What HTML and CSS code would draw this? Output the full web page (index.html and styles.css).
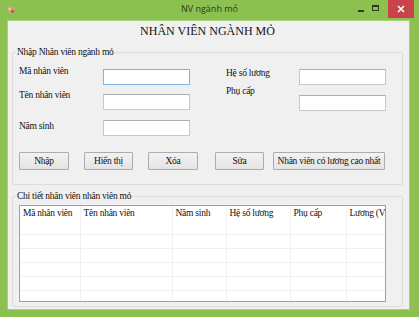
FILE: index.html
```html
<!DOCTYPE html>
<html lang="vi">
<head>
    <meta charset="UTF-8">
    <title>NV ngành mỏ</title>
    <link rel="stylesheet" href="styles.css">
</head>
<body>
    <div class="window">
        <div class="titlebar">
            <svg class="app-icon" width="10" height="10" viewBox="0 0 10 10">
                <circle cx="5" cy="5" r="4" fill="#c9a66b"/>
                <circle cx="3.5" cy="4" r="1.6" fill="#e1c98f"/>
                <circle cx="6.5" cy="6.5" r="1.4" fill="#8a6a3c"/>
            </svg>
            <div class="caption">NV ngành mỏ</div>
            <div class="controls">
                <span class="btn-min"></span>
                <span class="btn-max"></span>
                <span class="btn-close">
                    <svg width="8" height="8" viewBox="0 0 8 8"><path d="M1 1L7 7M7 1L1 7" stroke="#fff" stroke-width="1.6"/></svg>
                </span>
            </div>
        </div>
        <div class="client">
            <h1 class="heading">NHÂN VIÊN NGÀNH MỎ</h1>

            <fieldset class="group group-input">
                <legend>Nhập Nhân viên ngành mỏ</legend>
                <div class="form">
                    <div class="col col-left">
                        <div class="field f1">
                            <label>Mã nhân viên</label>
                            <input type="text" class="box focused">
                        </div>
                        <div class="field f2">
                            <label>Tên nhân viên</label>
                            <input type="text" class="box">
                        </div>
                        <div class="field f3">
                            <label>Năm sinh</label>
                            <input type="text" class="box">
                        </div>
                    </div>
                    <div class="col col-right">
                        <div class="field r1">
                            <label>Hệ số lương</label>
                            <input type="text" class="box">
                        </div>
                        <div class="field r2">
                            <label>Phụ cấp</label>
                            <input type="text" class="box">
                        </div>
                    </div>
                </div>
                <div class="buttons">
                    <button class="b-nhap">Nhập</button>
                    <button class="b-hien">Hiển thị</button>
                    <button class="b-xoa">Xóa</button>
                    <button class="b-sua">Sửa</button>
                    <button class="b-max">Nhân viên có lương cao nhất</button>
                </div>
            </fieldset>

            <fieldset class="group group-list">
                <legend>Chi tiết nhân viên nhân viên mỏ</legend>
                <div class="listview">
                    <table>
                        <colgroup>
                            <col style="width:60px">
                            <col style="width:92px">
                            <col style="width:54px">
                            <col style="width:64px">
                            <col style="width:56px">
                            <col style="width:80px">
                        </colgroup>
                        <thead>
                            <tr>
                                <th>Mã nhân viên</th>
                                <th>Tên nhân viên</th>
                                <th>Năm sinh</th>
                                <th>Hệ số lương</th>
                                <th>Phụ cấp</th>
                                <th>Lương (VNĐ)</th>
                            </tr>
                        </thead>
                        <tbody>
                            <tr><td></td><td></td><td></td><td></td><td></td><td></td></tr>
                            <tr><td></td><td></td><td></td><td></td><td></td><td></td></tr>
                            <tr><td></td><td></td><td></td><td></td><td></td><td></td></tr>
                            <tr><td></td><td></td><td></td><td></td><td></td><td></td></tr>
                            <tr><td></td><td></td><td></td><td></td><td></td><td></td></tr>
                            <tr><td></td><td></td><td></td><td></td><td></td><td></td></tr>
                        </tbody>
                    </table>
                </div>
            </fieldset>
        </div>
    </div>
</body>
</html>
```
FILE: styles.css
```css
*{
    box-sizing: border-box;
}
body{
    margin: 0;
    width: 419px;
    height: 317px;
    overflow: hidden;
    background: #8cc152;
    font-family: "Liberation Serif", serif;
    font-size: 9.5px;
    letter-spacing: -0.25px;
    color: #111;
}
.window{
    display: flex;
    flex-direction: column;
    height: 317px;
}

/* title bar */
.titlebar{
    height: 20px;
    display: flex;
    align-items: flex-start;
    position: relative;
}
.app-icon{
    margin: 5px 0 0 6px;
}
.caption{
    position: absolute;
    left: 0;
    right: 0;
    top: 2px;
    text-align: center;
    font-family: "Open Sans", sans-serif;
    font-size: 9px;
    letter-spacing: 0;
    line-height: 13px;
    color: #2d3a22;
}
.controls{
    margin-left: auto;
    display: flex;
    align-items: flex-start;
    margin-right: 5px;
}
.btn-min{
    width: 6px;
    height: 2px;
    background: #2d3a22;
    margin: 10px 8px 0 0;
}
.btn-max{
    width: 7px;
    height: 6px;
    border: 1px solid #2d3a22;
    border-top-width: 2px;
    margin: 5px 9px 0 0;
}
.btn-close{
    width: 26px;
    height: 18px;
    background: #c9434a;
    display: flex;
    align-items: center;
    justify-content: center;
}

/* client area */
.client{
    flex: 1;
    margin: 0 9px 7px 7px;
    background: #f0f0f0;
    border: 1px solid #a7cf7c;
    padding: 2px 6px 0 4px;
}
.heading{
    margin: 0;
    text-align: center;
    font-weight: normal;
    font-size: 12px;
    letter-spacing: 0;
    line-height: 16px;
}

.group{
    margin: 0;
    border: 1px solid #dcdcdc;
    border-radius: 2px;
    padding: 0 6px;
}
.group legend{
    padding: 0 1px;
    margin-left: -3px;
    line-height: 12px;
}
.group-input{
    margin-top: 7px;
    padding-top: 7px;
    padding-bottom: 14px;
}
.group-list{
    margin-top: 5px;
    padding-top: 3px;
    padding-bottom: 4px;
}

/* form */
.form{
    display: flex;
}
.col{
    display: flex;
    flex-direction: column;
}
.col-left{
    width: 207px;
}
.field{
    display: flex;
    align-items: flex-start;
}
.field label{
    line-height: 13px;
}
.col-left label{
    width: 84px;
}
.col-right label{
    width: 73px;
}
.box{
    width: 87px;
    height: 16px;
    margin: 0;
    border: 1px solid #c5c8cc;
    border-top-color: #abadb3;
    background: #fff;
    font: inherit;
}
.box.focused{
    border-color: #7eb4ea;
}
.f1 .box{ margin-top: 4px; }
.f2{ margin-top: 4px; }
.f2 .box{ margin-top: 5px; }
.f3{ margin-top: 10px; }
.r1 label{ margin-top: 2px; }
.r1 .box{ margin-top: 4px; }
.r2 .box{ margin-top: 10px; }

/* buttons */
.buttons{
    display: flex;
    margin-top: 16px;
}
.buttons button{
    height: 18px;
    padding: 0;
    font: inherit;
    letter-spacing: -0.25px;
    white-space: nowrap;
    color: #111;
    border: 1px solid #acacac;
    border-radius: 1px;
    background: linear-gradient(#f2f2f2, #e4e4e4);
}
.b-nhap{ width: 50px; }
.b-hien{ width: 49px; margin-left: 15px; }
.b-xoa{ width: 50px; margin-left: 15px; }
.b-sua{ width: 49px; margin-left: 17px; }
.b-max{ width: 112px; margin-left: 9px; }

/* list view */
.listview{
    width: 367px;
    height: 97px;
    border: 1px solid #a0a0a0;
    background: #fff;
    overflow: hidden;
}
.listview table{
    table-layout: fixed;
    width: 406px;
    border-collapse: collapse;
}
.listview th{
    height: 14px;
    padding: 0 0 0 3px;
    text-align: left;
    font-weight: normal;
    white-space: nowrap;
    overflow: hidden;
    line-height: 13px;
    border-right: 1px solid #f0f0f0;
}
.listview td{
    height: 14px;
    padding: 0;
    border-right: 1px solid #f0f0f0;
    border-bottom: 1px solid #f0f0f0;
}
```
